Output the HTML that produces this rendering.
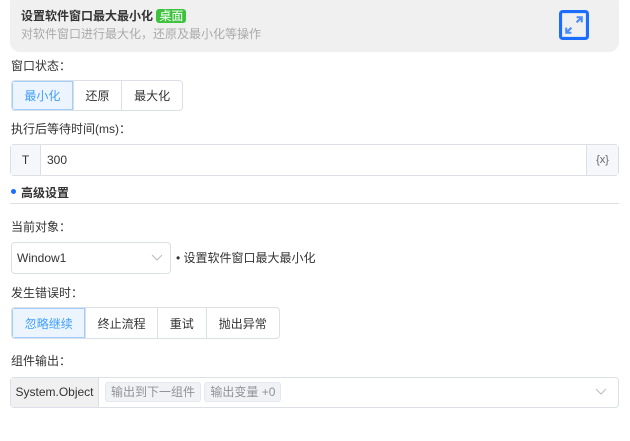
<!DOCTYPE html>
<html><head><meta charset="utf-8"><style>
*{box-sizing:border-box;margin:0;padding:0}
body{width:630px;height:441px;background:#fff;font-family:"Liberation Sans","Noto Sans CJK SC",sans-serif;font-size:12px;color:#333;position:relative;overflow:hidden}
.a{position:absolute}
.hdr{left:10px;top:-8px;width:609px;height:60px;background:#f0f0f0;border-radius:10px}
.lbl{left:11px;font-size:12px;color:#333}
.grp{display:flex;height:31px;border:1px solid #dcdfe6;border-radius:4px;overflow:hidden}
.grp div{display:flex;align-items:center;justify-content:center;border-left:1px solid #dcdfe6;font-size:12px;color:#333}
.grp div:first-child{border-left:none;background:#ecf5ff;color:#409eff;outline:1px solid #a0cfff;outline-offset:-1px}
.box{border:1px solid #dcdfe6;border-radius:4px}
.tag{display:inline-block;background:#f0f2f5;border:1px solid #e4e7ed;border-radius:3px;color:#909399;padding:0 5px;height:20px;line-height:18px;font-size:12px}
</style></head><body>
<div class="a hdr"></div>
<div class="a" style="left:21px;top:7px;font-weight:bold;font-size:12px;color:#333">设置软件窗口最大最小化 <span style="background:#3ec23e;color:#fff;font-weight:normal;border-radius:3px;padding:0 3px;font-size:12px">桌面</span></div>
<div class="a" style="left:21px;top:25px;color:#aaa;font-size:12px">对软件窗口进行最大化，还原及最小化等操作</div>
<svg class="a" style="left:559px;top:10px" width="30" height="30" viewBox="0 0 29 29"><rect x="1.5" y="1.5" width="26" height="26" rx="2" fill="none" stroke="#1a6dff" stroke-width="3"/><path d="M17 7h5v5M22 7l-5 5M12 22H7v-5M7 22l5-5" fill="none" stroke="#4a8cff" stroke-width="2"/></svg>
<div class="a lbl" style="top:57px">窗口状态：</div>
<div class="a grp" style="left:11px;top:80px;width:172px"><div style="width:61px">最小化</div><div style="width:49px">还原</div><div style="width:61px">最大化</div></div>
<div class="a lbl" style="top:120px">执行后等待时间(ms)：</div>
<div class="a box" style="left:10px;top:144px;width:609px;height:32px"></div>
<div class="a" style="left:11px;top:145px;width:30px;height:30px;background:#f5f7fa;border-right:1px solid #dcdfe6;text-align:center;line-height:30px">T</div>
<div class="a" style="left:47px;top:145px;line-height:30px">300</div>
<div class="a" style="left:586px;top:145px;width:32px;height:30px;background:#f5f7fa;border-left:1px solid #dcdfe6;text-align:center;line-height:30px;font-size:11px;color:#666">{x}</div>
<div class="a" style="left:11px;top:189px;width:5px;height:5px;border-radius:50%;background:#1a6dff"></div>
<div class="a" style="left:21px;top:184px;font-weight:bold">高级设置</div>
<div class="a" style="left:10px;top:203px;width:609px;height:1px;background:#dcdfe6"></div>
<div class="a lbl" style="top:218px">当前对象：</div>
<div class="a box" style="left:11px;top:242px;width:160px;height:32px"></div>
<div class="a" style="left:17px;top:251px">Window1</div>
<svg class="a" style="left:151px;top:254px" width="12" height="8"><path d="M1 1l5 5 5-5" fill="none" stroke="#bbb" stroke-width="1"/></svg>
<div class="a" style="left:176px;top:249px">• 设置软件窗口最大最小化</div>
<div class="a lbl" style="top:284px">发生错误时：</div>
<div class="a grp" style="left:11px;top:307px;width:269px;height:32px"><div style="width:74px">忽略继续</div><div style="width:72px">终止流程</div><div style="width:49px">重试</div><div style="width:74px">抛出异常</div></div>
<div class="a lbl" style="top:352px">组件输出：</div>
<div class="a box" style="left:10px;top:377px;width:609px;height:31px"></div>
<div class="a" style="left:11px;top:378px;width:88px;height:29px;background:#f0f0f0;border-right:1px solid #dcdfe6;text-align:center;line-height:29px">System.Object</div>
<div class="a" style="left:105px;top:382px"><span class="tag">输出到下一组件</span> <span class="tag">输出变量 +0</span></div>
<svg class="a" style="left:595px;top:388px" width="12" height="8"><path d="M1 1l5 5 5-5" fill="none" stroke="#bbb" stroke-width="1"/></svg>
</body></html>
